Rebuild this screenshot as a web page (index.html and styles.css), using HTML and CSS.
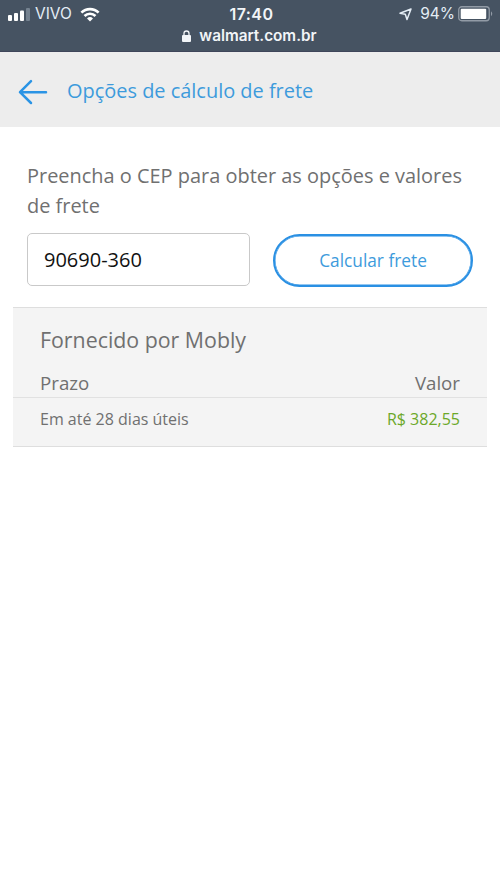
FILE: index.html
```html
<!DOCTYPE html>
<html lang="pt-BR">
<head>
<meta charset="utf-8">
<meta name="viewport" content="width=device-width, initial-scale=1">
<title>Opções de cálculo de frete</title>
<link rel="stylesheet" href="styles.css">
</head>
<body>
<div class="status">
  <div class="status-row">
    <div class="status-left">
      <svg width="22" height="14" viewBox="0 0 22 14" fill="#fff"><rect x="0" y="8" width="4" height="6" rx="1"/><rect x="6" y="6" width="4" height="8" rx="1"/><rect x="12" y="3.500" width="4" height="10.500" rx="1"/><rect x="18" y="1" width="4" height="13" rx="1" fill="#758290"/></svg>
      <span class="carrier">VIVO</span>
      <svg class="wifi" width="20" height="15" viewBox="0 0 20 15" fill="none" stroke="#fff" stroke-width="2.700"><path d="M1.400 5.600a12.200 12.200 0 0 1 17.200 0M4.500 9a7.800 7.800 0 0 1 11 0"/><path d="M10 14.500 7 11.500a4.300 4.300 0 0 1 6 0z" fill="#fff" stroke="none"/></svg>
    </div>
    <span class="time">17:40</span>
    <div class="status-right">
      <svg width="13" height="13" viewBox="0 0 13 13" fill="none" stroke="#e4edf5" stroke-width="1.500" stroke-linejoin="round"><path d="M12 1 1 5.300 6.300 6.300 8 11.500z"/></svg>
      <span class="percent">94%</span>
      <svg class="battery" width="36" height="16" viewBox="0 0 36 16"><rect x=".75" y=".75" width="30.500" height="14" rx="3" fill="none" stroke="#929ba6" stroke-width="1.300"/><rect x="2.700" y="2.700" width="25.500" height="10.200" rx="1" fill="#fff"/><path d="M33 5.300q2.500 2.500 0 5z" fill="#929ba6"/></svg>
    </div>
  </div>
  <div class="address">
    <svg width="9" height="12" viewBox="0 0 9 12"><rect y="5" width="9" height="7" rx="1" fill="#f2f5f8"/><path d="M2 5.500V3.500a2.500 2.500 0 0 1 5 0v2" fill="none" stroke="#f2f5f8" stroke-width="1.300"/></svg>
    <span class="domain">walmart.com.br</span>
  </div>
</div>
<header class="header">
  <svg class="back" width="30" height="26" viewBox="0 0 30 26" fill="none" stroke="#2a94e5" stroke-width="2.500" stroke-linecap="round" stroke-linejoin="round"><path d="M28 13.200H2M13 2.200 2 13.200l11 10.800"/></svg>
  <h1 class="title">Opções de cálculo de frete</h1>
</header>
<main class="main">
  <p class="intro"><span class="intro-one">Preencha o CEP para obter as opções e valores</span><br><span class="intro-two">de frete</span></p>
  <form class="form">
    <div class="field"><span class="cep">90690-360</span></div>
    <button class="button" type="button"><span class="button-label">Calcular frete</span></button>
  </form>
</main>
<section class="results">
  <h2 class="seller"><span class="seller-name">Fornecido por Mobly</span></h2>
  <div class="row heading"><span class="term">Prazo</span><span class="value">Valor</span></div>
  <div class="row quote"><span class="delivery">Em até 28 dias úteis</span><span class="price">R$ 382,55</span></div>
</section>
</body>
</html>
```
FILE: styles.css
```css
* { box-sizing: border-box; }
body { margin: 0; min-height: 889px; background: #fff; color: #707070; font-family: "Open Sans", sans-serif; }
svg { display: block; flex: none; }
.status { height: 52px; padding-top: 4px; background: #465362; color: #f2f5f8; font-family: Inter, sans-serif; border-bottom: 1px solid #3f465a; }
.status-row { height: 20px; display: grid; grid-template-columns: 1fr auto 1fr; align-items: center; padding: 0 5px 0 8px; line-height: 20px; }
.status-left, .status-right { display: flex; align-items: center; }
.status-right { justify-content: flex-end; }
.carrier { margin-left: 5px; font-size: 15.500px; color: #e4edf5; }
.wifi { margin-left: 8px; }
.time { font-size: 16px; font-weight: 600; letter-spacing: .4px; }
.percent { margin-left: 8px; font-size: 15.500px; color: #e4edf5; }
.battery { margin-left: 3px; margin-right: 1px; }
.address { display: flex; justify-content: center; align-items: center; gap: 8px; height: 24px; font-size: 15.300px; font-weight: 600; line-height: 24px; padding-right: 1px; }
.header { height: 75px; display: flex; align-items: center; padding: 5px 18px 0; background: #ededed; color: #3d9bdc; }
.title { margin: -3px 0 0 19px; font-size: 19.950px; line-height: 28px; font-weight: 400; white-space: nowrap; }
.main { padding: 34px 26px 0 27px; }
.intro { margin: 0; font-size: 19.970px; line-height: 29.500px; white-space: nowrap; }
.form { display: flex; align-items: flex-start; gap: 23px; margin-top: 13px; height: 54px; }
.field { width: 223px; height: 53px; display: flex; align-items: center; padding: 0 16px; border: 1px solid #c9c9c9; border-radius: 5px; color: #111; font-size: 20px; }
.button { width: 200px; height: 53px; margin-top: 1px; padding: 0; background: #fff; border: 2px solid #2a90e3; box-shadow: inset 0 0 0 .5px #2a90e3; border-radius: 27px; color: #3d9bdc; font: 17.300px "Open Sans", sans-serif; }
.results { margin: 20px 13px 0; height: 140px; background: #f4f4f4; border-top: 1px solid #dedede; border-bottom: 1px solid #dedede; }
.seller { margin: 0; padding: 16px 27px 0; font-size: 21.350px; line-height: 32px; font-weight: 400; }
.row { display: flex; justify-content: space-between; padding: 0 27px; }
.heading { height: 42px; padding-top: 14px; font-size: 18.700px; line-height: 26px; border-bottom: 1px solid #e1e1e1; }
.quote { height: 48px; padding-top: 7px; font-size: 16px; line-height: 28px; }
.price { color: #6ca829; }
```
